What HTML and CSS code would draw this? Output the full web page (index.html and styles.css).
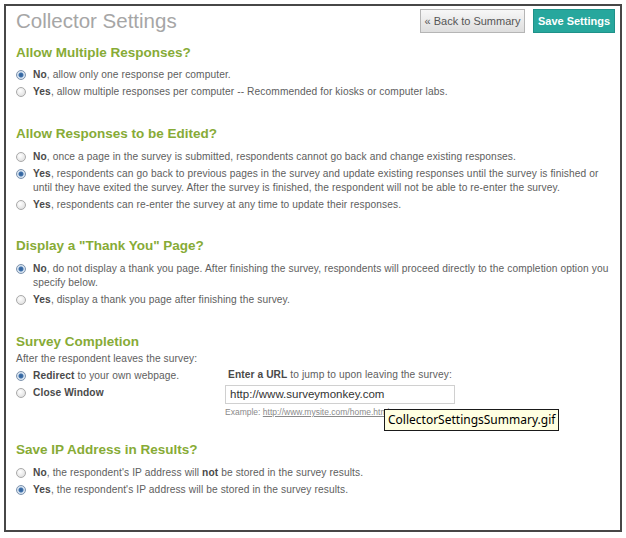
FILE: index.html
```html
<!DOCTYPE html>
<html>
<head>
<meta charset="utf-8">
<link rel="stylesheet" href="styles.css">
</head>
<body>
<div class="frame">
  <div class="header">
    <h1 class="title">Collector Settings</h1>
    <div class="actions">
      <span class="btn btn-back">« Back to Summary</span>
      <span class="btn btn-save">Save Settings</span>
    </div>
  </div>

  <div class="section s1">
    <h2 class="heading">Allow Multiple Responses?</h2>
    <div class="rows">
      <div class="row"><span class="radio on"></span><span class="txt"><b>No</b>, allow only one response per computer.</span></div>
      <div class="row"><span class="radio"></span><span class="txt"><b>Yes</b>, allow multiple responses per computer -- Recommended for kiosks or computer labs.</span></div>
    </div>
  </div>

  <div class="section s2">
    <h2 class="heading">Allow Responses to be Edited?</h2>
    <div class="rows">
      <div class="row"><span class="radio"></span><span class="txt"><b>No</b>, once a page in the survey is submitted, respondents cannot go back and change existing responses.</span></div>
      <div class="row"><span class="radio on"></span><span class="txt"><b>Yes</b>, respondents can go back to previous pages in the survey and update existing responses until the survey is finished or<br>until they have exited the survey. After the survey is finished, the respondent will not be able to re-enter the survey.</span></div>
      <div class="row"><span class="radio"></span><span class="txt"><b>Yes</b>, respondents can re-enter the survey at any time to update their responses.</span></div>
    </div>
  </div>

  <div class="section s3">
    <h2 class="heading">Display a "Thank You" Page?</h2>
    <div class="rows">
      <div class="row"><span class="radio on"></span><span class="txt"><b>No</b>, do not display a thank you page. After finishing the survey, respondents will proceed directly to the completion option you<br>specify below.</span></div>
      <div class="row"><span class="radio"></span><span class="txt"><b>Yes</b>, display a thank you page after finishing the survey.</span></div>
    </div>
  </div>

  <div class="section s4">
    <h2 class="heading">Survey Completion</h2>
    <div class="intro">After the respondent leaves the survey:</div>
    <div class="completion">
      <div class="rows left">
        <div class="row"><span class="radio on"></span><span class="txt"><b>Redirect</b> to your own webpage.</span></div>
        <div class="row"><span class="radio"></span><span class="txt"><b>Close Window</b></span></div>
      </div>
      <div class="right">
        <div class="label"><b>Enter a URL</b> to jump to upon leaving the survey:</div>
        <div class="input">http://www.surveymonkey.com</div>
        <div class="example">Example: <span class="link">http://www.mysite.com/home.html</span></div>
      </div>
    </div>
  </div>

  <div class="section s5">
    <h2 class="heading">Save IP Address in Results?</h2>
    <div class="rows">
      <div class="row"><span class="radio"></span><span class="txt"><b>No</b>, the respondent's IP address will <b>not</b> be stored in the survey results.</span></div>
      <div class="row"><span class="radio on"></span><span class="txt"><b>Yes</b>, the respondent's IP address will be stored in the survey results.</span></div>
    </div>
  </div>

  <div class="tooltip">CollectorSettingsSummary.gif</div>
</div>
</body>
</html>
```

FILE: styles.css
```css
html, body {
  margin: 0;
  padding: 0;
  background: #ffffff;
}

body {
  font-family: "Liberation Sans", Arial, sans-serif;
  color: #5e5e5e;
}

.frame {
  position: relative;
  box-sizing: border-box;
  margin: 4px;
  width: 618px;
  height: 528px;
  border: 2px solid #474747;
  padding: 3px 5px 0 10px;
}

.header {
  display: flex;
  justify-content: space-between;
  align-items: flex-start;
  height: 24px;
}

.title {
  margin: 0;
  font-size: 20.5px;
  line-height: 24px;
  font-weight: normal;
  color: #a6a6a6;
}

.actions {
  display: flex;
  gap: 8px;
}

.btn {
  box-sizing: border-box;
  height: 24px;
  line-height: 22px;
  font-size: 11px;
  text-align: center;
  border: 1px solid #b5b5b5;
}

.btn-back {
  width: 105px;
  color: #555;
  background: linear-gradient(#f7f7f7, #dedede);
}

.btn-save {
  width: 82px;
  color: #ffffff;
  font-weight: bold;
  background: #27a79d;
  border-color: #1f9189;
}

.heading {
  margin: 0;
  font-size: 13.5px;
  line-height: 16px;
  font-weight: bold;
  color: #87ab36;
}

.section { margin-top: 26px; }
.s1 { margin-top: 12px; }
.s1 .heading { margin-bottom: 7px; }
.s2 { margin-top: 27px; }
.s2 .heading, .s3 .heading, .s5 .heading { margin-bottom: 8px; }
.s4 { margin-top: 27px; }
.s5 { margin-top: 24px; }

.rows {
  display: flex;
  flex-direction: column;
  gap: 3px;
}

.row {
  display: flex;
  align-items: flex-start;
  font-size: 10.2px;
  line-height: 14px;
  letter-spacing: 0.1px;
}

.txt { white-space: nowrap; }

.txt b { color: #4a4a4a; }

.radio {
  flex: none;
  box-sizing: border-box;
  width: 10px;
  height: 10px;
  margin: 2px 7px 0 0;
  border-radius: 50%;
  border: 1px solid #a9a9a9;
  background: radial-gradient(circle at 40% 35%, #ffffff, #d8d8d8);
}

.radio.on {
  border-color: #7d93ad;
  background: radial-gradient(circle, #2f5e96 0, #3f72ad 2px, #dbe6f2 3px, #c8d6e6 100%);
}

.intro {
  margin-top: 2px;
  font-size: 10.2px;
  line-height: 14px;
  letter-spacing: 0.1px;
}

.completion {
  display: flex;
  margin-top: 2px;
}

.left { width: 209px; margin-top: 1px; }

.right {
  display: flex;
  flex-direction: column;
}

.label {
  padding-left: 3px;
  font-size: 10.2px;
  line-height: 14px;
  letter-spacing: 0.1px;
}

.label b { color: #4a4a4a; }

.input {
  box-sizing: border-box;
  margin-top: 3px;
  width: 230px;
  height: 19px;
  border: 1px solid #d0d0d0;
  padding-left: 4px;
  font-size: 11.5px;
  line-height: 17px;
  color: #333;
}

.example {
  margin-top: 2px;
  font-size: 8.5px;
  line-height: 12px;
  color: #8a8a8a;
}

.link { text-decoration: underline; }

.tooltip {
  position: absolute;
  left: 378px;
  top: 403px;
  box-sizing: border-box;
  height: 22px;
  padding: 0 3px;
  border: 1px solid #1a1a1a;
  background: #ffffe1;
  color: #000;
  font-family: "Noto Sans", "DejaVu Sans", sans-serif;
  font-size: 12px;
  line-height: 20px;
}
```
